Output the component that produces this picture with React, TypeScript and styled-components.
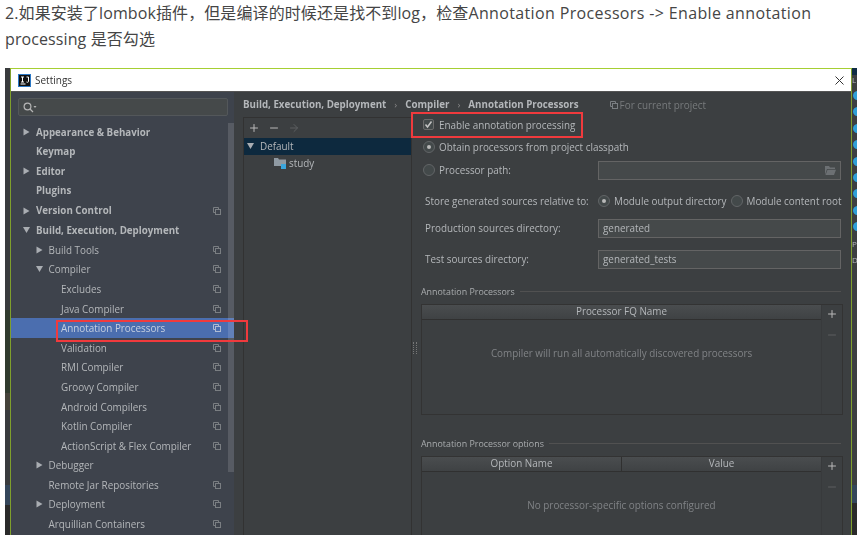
import React from 'react';
import styled, { createGlobalStyle } from 'styled-components';
import { Plus, Minus, ArrowRight } from 'lucide-react';

const GlobalStyle = createGlobalStyle`
  html, body {
    margin: 0;
    padding: 0;
    background: #fff;
    overflow: hidden;
  }
`;

const Page = styled.div`
  width: 857px;
  height: 535px;
  overflow: hidden;
  font-family: "Open Sans", "Noto Sans CJK SC", sans-serif;
`;

const Intro = styled.p`
  margin: 0;
  padding: 0 20px 0 5px;
  height: 68px;
  font-size: 16px;
  line-height: 26px;
  letter-spacing: 0.1px;
  color: #454545;
`;

const LatinRun = styled.span`
  letter-spacing: 0.36px;
`;

const Shot = styled.div`
  display: flex;
  height: 467px;
  margin-left: 5px;
  filter: blur(0.3px);
`;

const EdgeLeft = styled.div`
  width: 5px;
  flex: none;
  background: linear-gradient(
    #393b3d 0 242px,
    #303b2e 242px 325px,
    #45423a 325px 342px,
    #393b3d 342px 417px,
    #34465a 417px 437px,
    #2a2a2a 437px
  );
`;

const EdgeRight = styled.div`
  width: 5px;
  flex: none;
  box-sizing: border-box;
  display: flex;
  flex-direction: column;
  padding-top: 3px;
  overflow: hidden;
  color: #b4b7ba;
  font-size: 8px;
  background: linear-gradient(
    #0f2c44 0 7px,
    #3c3f41 7px 417px,
    #34465a 417px 435px,
    #2a2a2a 435px
  );
`;

const EdgeRow = styled.div`
  height: 16.4px;
  flex: none;
  display: flex;
  align-items: center;
  white-space: nowrap;
`;

const EdgeDot = styled.span`
  display: block;
  width: 9px;
  height: 9px;
  flex: none;
  margin-left: 1px;
  border-radius: 50%;
  background: #2f9fd6;
`;

const Settings = styled.div`
  flex: 1;
  min-width: 0;
  display: flex;
  flex-direction: column;
  position: relative;
  border: 1px solid #7f9f2c;
  border-top: 1.5px solid #a6cf33;
  border-bottom: 0;
  color: #b4b7ba;
  font-size: 9.9px;
`;

const TitleBar = styled.div`
  height: 23px;
  flex: none;
  box-sizing: border-box;
  display: flex;
  align-items: center;
  gap: 4px;
  padding: 0 7px 0 7px;
  background: #fff;
  color: #333;
  border-bottom: 1px solid #555;
  font-size: 10px;
`;

const TitleText = styled.span`
  flex: 1;
`;

const Body = styled.div`
  flex: 1;
  min-height: 0;
  display: flex;
`;

const Sidebar = styled.div`
  width: 223px;
  flex: none;
  display: flex;
  flex-direction: column;
  background: #3e434c;
  overflow: hidden;
`;

const SearchBox = styled.div`
  height: 18px;
  flex: none;
  box-sizing: border-box;
  margin: 6px 6px 6.4px 7px;
  padding-left: 4px;
  display: flex;
  align-items: center;
  background: #45494a;
  border: 1px solid #53575a;
  border-radius: 2px;
`;

const TreeArea = styled.div`
  flex: 1;
  display: flex;
  min-height: 0;
`;

const Tree = styled.div`
  flex: 1;
  min-width: 0;
`;

const Row = styled.div<{ $depth: number; $selected?: boolean }>`
  height: 19.6px;
  display: flex;
  align-items: center;
  padding-left: ${p => 12 + p.$depth * 12.5}px;
  padding-right: ${p => (p.$selected ? '13px' : '7px')};
  margin-right: ${p => (p.$selected ? '-6px' : '0')};
  background: ${p => (p.$selected ? '#4b6eaf' : 'transparent')};
  color: ${p => (p.$selected ? '#c5cfe0' : '#b4b7ba')};
`;

const Arrow = styled.span<{ $open?: boolean }>`
  width: 13px;
  flex: none;
  display: flex;
  svg {
    display: block;
    fill: #a9adb2;
    transform: ${p => (p.$open ? 'rotate(90deg)' : 'none')};
  }
`;

const RowLabel = styled.span<{ $strong?: boolean }>`
  flex: 1;
  white-space: nowrap;
  font-weight: ${p => (p.$strong ? 700 : 400)};
  font-size: ${p => (p.$strong ? '9.75px' : 'inherit')};
`;

const ScrollTrack = styled.div`
  width: 6px;
  flex: none;
  margin-top: 1px;
`;

const ScrollThumb = styled.div`
  height: 349px;
  background: rgba(255, 255, 255, 0.13);
`;

const Content = styled.div`
  flex: 1;
  min-width: 0;
  display: flex;
  flex-direction: column;
  background: #3c3f41;
  overflow: hidden;
`;

const Breadcrumb = styled.div`
  height: 25px;
  flex: none;
  display: flex;
  align-items: center;
  padding-left: 9px;
  font-weight: 700;
  font-size: 9.75px;
  white-space: nowrap;
`;

const CrumbSep = styled.span`
  margin: 0 8px;
  font-weight: 400;
  color: #888;
`;

const ProjectHint = styled.span`
  display: flex;
  align-items: center;
  gap: 2px;
  margin-left: 31px;
  font-weight: 400;
  font-size: 9.9px;
  color: #777a7c;
`;

const Split = styled.div`
  flex: 1;
  min-height: 0;
  display: flex;
`;

const Profiles = styled.div`
  width: 168px;
  flex: none;
  box-sizing: border-box;
  margin-left: 9px;
  border-top: 1px solid #323232;
  border-left: 1px solid #323232;
`;

const ProfileTools = styled.div`
  height: 19.5px;
  display: flex;
  align-items: center;
  gap: 8px;
  padding-left: 4px;
`;

const ProfileRow = styled.div<{ $selected?: boolean }>`
  height: 17px;
  display: flex;
  align-items: center;
  padding-left: ${p => (p.$selected ? '3px' : '30px')};
  background: ${p => (p.$selected ? '#0d293e' : 'transparent')};
`;

const Form = styled.div`
  flex: 1;
  min-width: 0;
  position: relative;
  display: flex;
  flex-direction: column;
  padding: 0 10px 0 11px;
  border-left: 1px solid #323232;
`;

const Line = styled.div<{ $top?: number }>`
  height: 19px;
  flex: none;
  margin-top: ${p => p.$top ?? 0}px;
  display: flex;
  align-items: center;
  white-space: nowrap;
`;

const CheckLine = styled(Line)`
  height: 15px;
`;

const LabelCell = styled.span`
  width: 175px;
  flex: none;
  box-sizing: border-box;
  padding-left: 2px;
`;

const PathLabel = styled.span`
  width: 159px;
  flex: none;
`;

const OutputLabel = styled.span`
  margin-right: 4px;
`;

const Check = styled.span`
  width: 11px;
  height: 11px;
  flex: none;
  margin-right: 5px;
  border: 1px solid #6b6b6b;
  border-radius: 2px;
  background: #43494a;
  display: flex;
  align-items: center;
  justify-content: center;
  box-sizing: border-box;
`;

const Radio = styled.span<{ $on?: boolean }>`
  width: 12px;
  height: 12px;
  flex: none;
  margin-right: 4px;
  box-sizing: border-box;
  border: 1px solid #626567;
  border-radius: 50%;
  background: #43494a;
  display: flex;
  align-items: center;
  justify-content: center;
  &::after {
    content: '';
    width: 4px;
    height: 4px;
    border-radius: 50%;
    background: ${p => (p.$on ? '#b9b9b9' : 'transparent')};
  }
`;

const Field = styled.div`
  width: 243px;
  height: 19px;
  flex: none;
  box-sizing: border-box;
  padding: 0 4px;
  display: flex;
  align-items: center;
  justify-content: space-between;
  background: #45494a;
  border: 1px solid #646464;
`;

const Legend = styled.div<{ $top: number }>`
  height: 12px;
  flex: none;
  margin: ${p => p.$top}px 0 0 -2px;
  display: flex;
  align-items: center;
  gap: 5px;
  font-size: 8.9px;
  color: #a9acae;
  white-space: nowrap;
  &::after {
    content: '';
    flex: 1;
    height: 1px;
    background: #515151;
  }
`;

const TableFrame = styled.div`
  height: 111px;
  flex: none;
  box-sizing: border-box;
  display: flex;
  margin: 6.5px -2px 0 -2px;
  border: 1px solid #333;
`;

const TableMain = styled.div`
  flex: 1;
  min-width: 0;
  display: flex;
  flex-direction: column;
`;

const TableHead = styled.div`
  height: 14px;
  flex: none;
  display: flex;
  background: linear-gradient(#4a4d4f, #3f4244);
  border-bottom: 1px solid #303030;
`;

const HeadCell = styled.div`
  flex: 1;
  text-align: center;
  line-height: 13px;
  & + & {
    border-left: 1px solid #303030;
  }
`;

const EmptyText = styled.div`
  height: 67px;
  display: flex;
  align-items: center;
  justify-content: center;
  color: #808386;
`;

const TableTools = styled.div`
  width: 20px;
  flex: none;
  display: flex;
  flex-direction: column;
  align-items: center;
  gap: 9px;
  padding-top: 3px;
  border-left: 1px solid #383a3c;
`;

const Handle = styled.div`
  position: absolute;
  left: 1px;
  top: 224.5px;
  width: 2px;
  height: 12px;
  border-left: 1px dotted #777;
  border-right: 1px dotted #777;
`;

const Callout = styled.div<{ $x: number; $y: number; $w: number; $h: number }>`
  position: absolute;
  left: ${p => p.$x}px;
  top: ${p => p.$y}px;
  width: ${p => p.$w}px;
  height: ${p => p.$h}px;
  box-sizing: border-box;
  border: 2px solid #f03a3d;
  pointer-events: none;
`;

const LogoBox = styled.svg`
  display: block;
  flex: none;
`;

const SharedSvg = styled.svg<{ $light?: boolean }>`
  flex: none;
  fill: none;
  stroke: ${p => (p.$light ? '#aebbd3' : '#7a7e82')};
`;

const ProjectIcon = ({ light }: { light?: boolean }) => (
  <SharedSvg $light={light} width="8" height="8" viewBox="0 0 8 8">
    <path d="M5.5 2.5 V0.5 H0.5 V5.5 H2.5" />
    <rect x="2.5" y="2.5" width="5" height="5" />
  </SharedSvg>
);

const Triangle = () => (
  <svg width="7" height="8" viewBox="0 0 7 8">
    <path d="M0.5 0.5 L6.5 4 L0.5 7.5 Z" />
  </svg>
);

type Item = { label: string; depth: number; arrow?: 'open' | 'closed'; strong?: boolean; shared?: boolean; selected?: boolean };

const items: Item[] = [
  { label: 'Appearance & Behavior', depth: 0, arrow: 'closed', strong: true },
  { label: 'Keymap', depth: 0, strong: true },
  { label: 'Editor', depth: 0, arrow: 'closed', strong: true },
  { label: 'Plugins', depth: 0, strong: true },
  { label: 'Version Control', depth: 0, arrow: 'closed', strong: true, shared: true },
  { label: 'Build, Execution, Deployment', depth: 0, arrow: 'open', strong: true },
  { label: 'Build Tools', depth: 1, arrow: 'closed', shared: true },
  { label: 'Compiler', depth: 1, arrow: 'open', shared: true },
  { label: 'Excludes', depth: 2, shared: true },
  { label: 'Java Compiler', depth: 2, shared: true },
  { label: 'Annotation Processors', depth: 2, shared: true, selected: true },
  { label: 'Validation', depth: 2, shared: true },
  { label: 'RMI Compiler', depth: 2, shared: true },
  { label: 'Groovy Compiler', depth: 2, shared: true },
  { label: 'Android Compilers', depth: 2, shared: true },
  { label: 'Kotlin Compiler', depth: 2, shared: true },
  { label: 'ActionScript & Flex Compiler', depth: 2, shared: true },
  { label: 'Debugger', depth: 1, arrow: 'closed' },
  { label: 'Remote Jar Repositories', depth: 1, shared: true },
  { label: 'Deployment', depth: 1, arrow: 'closed', shared: true },
  { label: 'Arquillian Containers', depth: 1, shared: true },
];

export default function App() {
  return (
    <Page>
      <GlobalStyle />
      <Intro>
        2.如果安装了lombok插件，但是编译的时候还是找不到log，检查<LatinRun>Annotation Processors -&gt; Enable annotation</LatinRun> processing 是否勾选
      </Intro>
      <Shot>
        <EdgeLeft />
        <Settings>
          <TitleBar>
            <LogoBox width="13" height="13" viewBox="0 0 13 13">
              <rect width="13" height="13" fill="#2b78c5" />
              <rect x="1" y="1" width="11" height="11" fill="#111" />
              <rect x="2.5" y="9.5" width="5" height="1" fill="#fff" />
              <path d="M3 3h3M4.5 3v5M3 8h3M8.5 3h2v4.5c0 .8-1 1-2 .5" stroke="#fff" strokeWidth="1" fill="none" />
            </LogoBox>
            <TitleText>Settings</TitleText>
            <svg width="9" height="9" viewBox="0 0 9 9" stroke="#333" strokeWidth="1">
              <path d="M0.5 0.5 L8.5 8.5 M8.5 0.5 L0.5 8.5" />
            </svg>
          </TitleBar>
          <Body>
            <Sidebar>
              <SearchBox>
                <svg width="14" height="11" viewBox="0 0 14 11" fill="none" stroke="#b5b5b5" strokeWidth="1.2">
                  <circle cx="4.5" cy="4.5" r="3.4" />
                  <path d="M7 7 L10 10" />
                  <path d="M10.5 4 h3 l-1.5 2 z" fill="#b5b5b5" stroke="none" />
                </svg>
              </SearchBox>
              <TreeArea>
                <Tree>
                  {items.map(it => (
                    <Row key={it.label} $depth={it.depth} $selected={it.selected}>
                      <Arrow $open={it.arrow === 'open'}>{it.arrow && <Triangle />}</Arrow>
                      <RowLabel $strong={it.strong}>{it.label}</RowLabel>
                      {it.shared && <ProjectIcon light={it.selected} />}
                    </Row>
                  ))}
                </Tree>
                <ScrollTrack>
                  <ScrollThumb />
                </ScrollTrack>
              </TreeArea>
            </Sidebar>
            <Content>
              <Breadcrumb>
                Build, Execution, Deployment
                <CrumbSep>›</CrumbSep>
                Compiler
                <CrumbSep>›</CrumbSep>
                Annotation Processors
                <ProjectHint>
                  <ProjectIcon />
                  For current project
                </ProjectHint>
              </Breadcrumb>
              <Split>
                <Profiles>
                  <ProfileTools>
                    <Plus size={12} color="#b9b9b9" />
                    <Minus size={12} color="#b9b9b9" />
                    <ArrowRight size={12} color="#5c5f61" />
                  </ProfileTools>
                  <ProfileRow $selected>
                    <Arrow $open>
                      <Triangle />
                    </Arrow>
                    Default
                  </ProfileRow>
                  <ProfileRow>
                    <svg width="13" height="12" viewBox="0 0 13 12" style={{ marginRight: 2 }}>
                      <path d="M0 1h4l1 1.5h7V9H0z" fill="#8f9aa3" />
                      <rect x="7" y="7" width="5" height="5" fill="#3aa6dd" />
                    </svg>
                    study
                  </ProfileRow>
                </Profiles>
                <Form>
                  <CheckLine>
                    <Check>
                      <svg width="9" height="9" viewBox="0 0 9 9" fill="none" stroke="#c4c4c4" strokeWidth="1.5">
                        <path d="M1.5 4.5 L3.5 7 L7.5 1.5" />
                      </svg>
                    </Check>
                    Enable annotation processing
                  </CheckLine>
                  <Line $top={5}>
                    <Radio $on />
                    Obtain processors from project classpath
                  </Line>
                  <Line $top={4.5}>
                    <Radio />
                    <PathLabel>Processor path:</PathLabel>
                    <Field>
                      <span />
                      <svg width="11" height="9" viewBox="0 0 11 9">
                        <path d="M0 0h4l1 1.5h5V3H2L0 9z M2.5 3.8H11L9 9H0.6z" fill="#6c7073" />
                      </svg>
                    </Field>
                  </Line>
                  <Line $top={12}>
                    <LabelCell>Store generated sources relative to:</LabelCell>
                    <Radio $on />
                    <OutputLabel>Module output directory</OutputLabel>
                    <Radio />
                    Module content root
                  </Line>
                  <Line $top={8}>
                    <LabelCell>Production sources directory:</LabelCell>
                    <Field>generated</Field>
                  </Line>
                  <Line $top={12}>
                    <LabelCell>Test sources directory:</LabelCell>
                    <Field>generated_tests</Field>
                  </Line>
                  <Legend $top={16.5}>Annotation Processors</Legend>
                  <TableFrame>
                    <TableMain>
                      <TableHead>
                        <HeadCell>Processor FQ Name</HeadCell>
                      </TableHead>
                      <EmptyText>Compiler will run all automatically discovered processors</EmptyText>
                    </TableMain>
                    <TableTools>
                      <Plus size={12} color="#b9b9b9" />
                      <Minus size={12} color="#5c5f61" />
                    </TableTools>
                  </TableFrame>
                  <Legend $top={22.5}>Annotation Processor options</Legend>
                  <TableFrame>
                    <TableMain>
                      <TableHead>
                        <HeadCell>Option Name</HeadCell>
                        <HeadCell>Value</HeadCell>
                      </TableHead>
                      <EmptyText>No processor-specific options configured</EmptyText>
                    </TableMain>
                    <TableTools>
                      <Plus size={12} color="#b9b9b9" />
                      <Minus size={12} color="#5c5f61" />
                    </TableTools>
                  </TableFrame>
                  <Handle />
                </Form>
              </Split>
            </Content>
          </Body>
          <Callout $x={45} $y={250.5} $w={192} $h={22} />
          <Callout $x={400} $y={42.5} $w={172} $h={26} />
        </Settings>
        <EdgeRight>
          <EdgeRow>L</EdgeRow>
          {Array.from({ length: 9 }, (_, i) => (
            <EdgeRow key={i}>
              <EdgeDot />
            </EdgeRow>
          ))}
          <EdgeRow>P</EdgeRow>
          <EdgeRow>D</EdgeRow>
        </EdgeRight>
      </Shot>
    </Page>
  );
}
